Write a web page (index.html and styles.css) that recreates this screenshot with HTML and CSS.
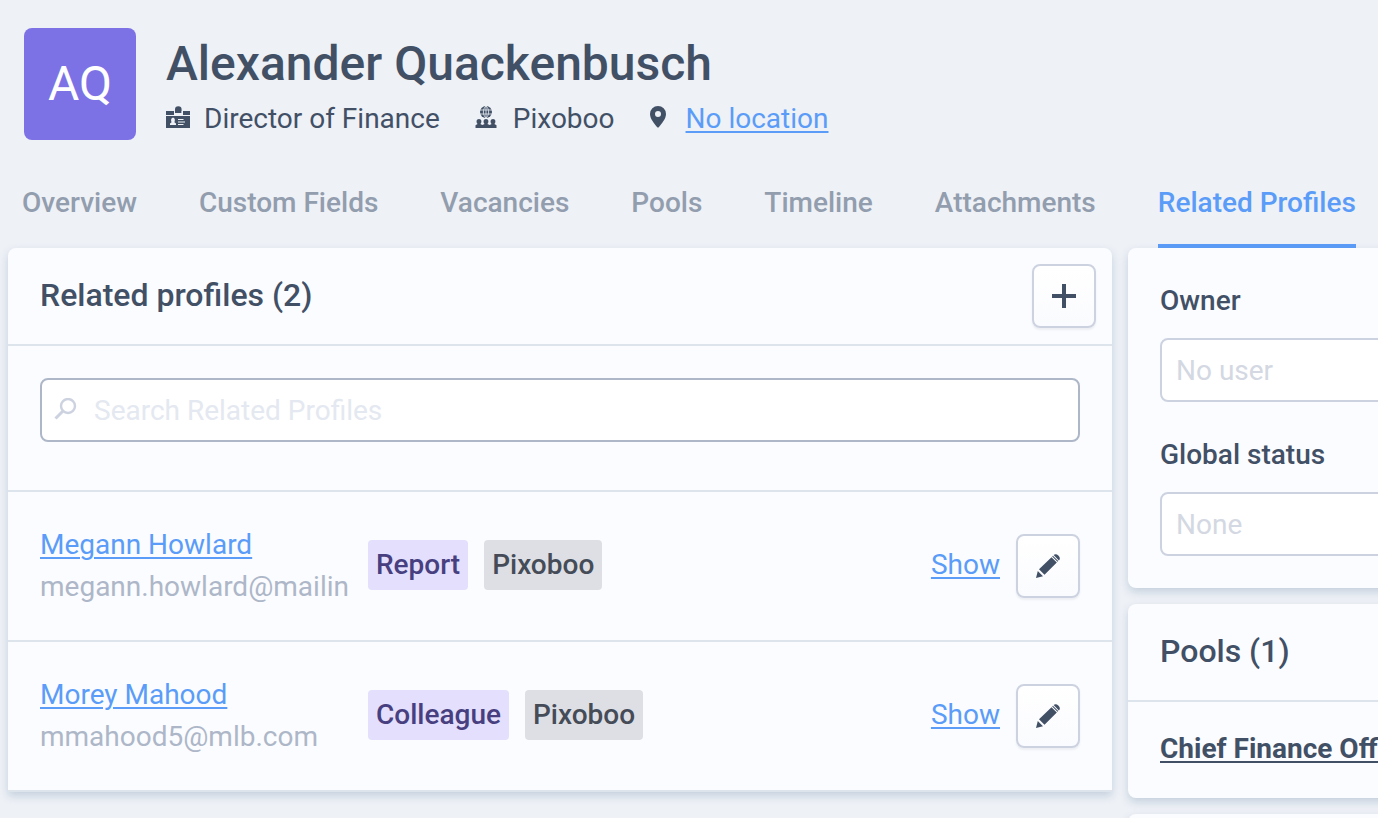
FILE: index.html
```html
<!DOCTYPE html>
<html lang="en">
<head>
<meta charset="utf-8">
<title>Alexander Quackenbusch</title>
<link rel="stylesheet" href="styles.css">
</head>
<body>
<div class="page">
  <header class="profile">
    <div class="avatar">AQ</div>
    <div class="profile-text">
      <h1 class="profile-name">Alexander Quackenbusch</h1>
      <ul class="facts">
        <li class="fact fact-job">
          <svg class="icon-badge" width="24" height="22" viewBox="0 0 24 22" aria-hidden="true">
            <path fill="currentColor" d="M0 5h8v4H0zM17 5h7v4h-7zM9 7V3.500a3.300 3.300 0 0 1 6.600 0V7zM0 10h24v12H0z"/>
            <path fill="#eef1f6" d="M8 5h1v2h6.600V5H17v3H8zM4 19v-1.500l1.600-1.200C4.700 14.500 5 11.800 7 11.800s2.300 2.700 1.400 4.500L10 17.500V19zM12 13h5.500v1H12zM12 15.500h7v1h-7zM12 18h5.500v1H12z"/>
          </svg>
          <span>Director of Finance</span>
        </li>
        <li class="fact fact-company">
          <svg class="icon-people" width="22" height="22" viewBox="0 0 22 22" aria-hidden="true">
            <circle cx="11" cy="6" r="6" fill="currentColor"/>
            <path fill="none" stroke="#eef1f6" stroke-width=".8" d="M4 4h14M4 8h14M11 0v12M11 0C7.500 3 7.500 9 11 12M11 0c3.500 3 3.500 9 0 12"/>
            <path fill="currentColor" d="M.5 22v-2.800L2.600 18c-1.700-2-1.300-5 1.400-5s3.100 3 1.400 5l1.900 1L9.600 18c-1.700-2-1.300-5 1.400-5s3.100 3 1.400 5l2.300 1 1.900-1c-1.700-2-1.300-5 1.400-5s3.100 3 1.400 5l2.100 1.200V22z"/>
          </svg>
          <span>Pixoboo</span>
        </li>
        <li class="fact fact-place">
          <svg class="icon-pin" width="16" height="22" viewBox="0 0 16 22" aria-hidden="true">
            <path fill="currentColor" fill-rule="evenodd" d="M8 0a8 8 0 0 1 8 8c0 5-4.500 9.500-7 13q-1 1-2 0C4.500 17.500 0 13 0 8a8 8 0 0 1 8-8zm0 5a3 3 0 1 0 0 6 3 3 0 0 0 0-6z"/>
          </svg>
          <a class="link" href="#location">No location</a>
        </li>
      </ul>
    </div>
  </header>

  <nav class="tabs">
    <a class="tab" href="#overview">Overview</a>
    <a class="tab" href="#custom-fields">Custom Fields</a>
    <a class="tab" href="#vacancies">Vacancies</a>
    <a class="tab" href="#pools">Pools</a>
    <a class="tab" href="#timeline">Timeline</a>
    <a class="tab" href="#attachments">Attachments</a>
    <a class="tab tab-active" href="#related" aria-current="page">Related Profiles</a>
  </nav>

  <div class="columns">
    <main class="card card-main">
      <div class="card-header">
        <h2 class="card-title">Related profiles (2)</h2>
        <button class="icon-button" type="button" aria-label="Add related profile">
          <svg width="24" height="24" viewBox="0 0 24 24" aria-hidden="true"><path fill="currentColor" d="M10 0h4v10h10v4H14v10h-4V14H0v-4h10z"/></svg>
        </button>
      </div>
      <div class="search">
        <div class="search-box">
          <svg class="search-icon" width="24" height="24" viewBox="0 0 24 24" aria-hidden="true"><g fill="none" stroke="currentColor" stroke-width="2.400"><circle cx="14" cy="8" r="7"/><path d="M9 13l-7.500 7.500" stroke-width="3"/></g></svg>
          <input class="search-input" type="search" placeholder="Search Related Profiles" aria-label="Search Related Profiles">
        </div>
      </div>
      <ul class="people">
        <li class="person">
          <div class="person-id">
            <a class="link" href="#megann">Megann Howlard</a>
            <span class="email">megann.howlard@mailin</span>
          </div>
          <div class="tags"><span class="tag tag-relation">Report</span><span class="tag">Pixoboo</span></div>
          <a class="link show-link" href="#show-megann">Show</a>
          <button class="icon-button" type="button" aria-label="Edit Megann Howlard">
            <svg width="24" height="24" viewBox="0 0 24 24" aria-hidden="true"><path fill="currentColor" d="M0 24l1.800-7 5.200 5.200zM3 15.300L15.500 3.200l5.300 5.300L8.500 20.800zM16.200 2.500l.7-.7 5.300 5.300-.7.700zM17.600 1.100C19-.3 20.700-.2 22.300 1.600 24.200 3.400 24.300 5 22.900 6.400z"/></svg>
          </button>
        </li>
        <li class="person">
          <div class="person-id">
            <a class="link" href="#morey">Morey Mahood</a>
            <span class="email">mmahood5@mlb.com</span>
          </div>
          <div class="tags"><span class="tag tag-relation">Colleague</span><span class="tag">Pixoboo</span></div>
          <a class="link show-link" href="#show-morey">Show</a>
          <button class="icon-button" type="button" aria-label="Edit Morey Mahood">
            <svg width="24" height="24" viewBox="0 0 24 24" aria-hidden="true"><path fill="currentColor" d="M0 24l1.800-7 5.200 5.200zM3 15.300L15.500 3.200l5.300 5.300L8.500 20.800zM16.200 2.500l.7-.7 5.300 5.300-.7.700zM17.600 1.100C19-.3 20.700-.2 22.300 1.600 24.200 3.400 24.300 5 22.900 6.400z"/></svg>
          </button>
        </li>
      </ul>
    </main>

    <aside class="side">
      <section class="card fields">
        <div class="field">
          <label class="field-label" for="owner">Owner</label>
          <select class="field-select" id="owner"><option>No user</option></select>
        </div>
        <div class="field">
          <label class="field-label" for="status">Global status</label>
          <select class="field-select" id="status"><option>None</option></select>
        </div>
      </section>
      <section class="card">
        <div class="card-header"><h2 class="card-title">Pools (1)</h2></div>
        <div class="pool"><a class="pool-link" href="#pool">Chief Finance Officer</a></div>
      </section>
      <section class="card card-next"></section>
    </aside>
  </div>
</div>
</body>
</html>
```
FILE: styles.css
```css
* { box-sizing: border-box; }

html { overflow: hidden; }

body {
  margin: 0;
  background: #eef1f6;
  color: #425066;
  font: 400 28px/42px Roboto, "Liberation Sans", sans-serif;
}

h1, h2, ul { margin: 0; padding: 0; font-weight: 500; }
ul { list-style: none; font-weight: 400; }
svg { display: block; flex: none; }

/* The side column runs past the right edge of the window. */
.page { margin-right: -240px; padding: 28px 8px 24px; }

.link { color: #5a9cf8; text-decoration: underline; text-decoration-thickness: 2px; text-underline-offset: 3px; }

.profile { display: flex; gap: 30px; padding: 0 16px; }

.avatar {
  display: flex;
  align-items: center;
  justify-content: center;
  flex: none;
  width: 112px;
  height: 112px;
  border-radius: 8px;
  background: #7c72e6;
  color: #fff;
  font-size: 48px;
}

.profile-name { padding-top: 6px; font-size: 48px; line-height: 60px; }

.facts { display: flex; gap: 35px; padding-top: 4px; }
.fact { display: flex; align-items: center; gap: 14px; }
.fact svg { margin-bottom: 4px; }
.fact-company { gap: 16px; }
.fact-place { gap: 20px; }

.tabs { display: flex; gap: 62px; margin-top: 36px; padding: 0 14px; }

.tab {
  height: 72px;
  padding-top: 6px;
  border-bottom: 4px solid transparent;
  color: #929dae;
  font-weight: 500;
  text-decoration: none;
  white-space: nowrap;
}

.tab-active { border-color: #5a9cf8; color: #5a9cf8; }

.columns { display: grid; grid-template-columns: minmax(0, 1fr) 482px; gap: 16px; align-items: start; }

.card {
  border-radius: 8px;
  background: #fbfcff;
  box-shadow: 0 4px 8px rgba(110, 140, 170, 0.32);
}

.card-main { border-radius: 8px 8px 0 0; }

.card-header {
  display: flex;
  align-items: center;
  justify-content: space-between;
  height: 98px;
  padding: 0 16px 0 32px;
  border-bottom: 2px solid #dee4ec;
}

.card-title { padding-bottom: 2px; font-size: 32px; line-height: 48px; }

.icon-button {
  display: flex;
  align-items: center;
  justify-content: center;
  flex: none;
  width: 64px;
  height: 64px;
  padding: 0;
  border: 2px solid #ccd2e0;
  border-radius: 8px;
  background: linear-gradient(#fff, #fafbfe);
  box-shadow: 0 2px 2px rgba(66, 80, 102, 0.08);
  color: #425066;
}

.search { padding: 32px 32px 48px; border-bottom: 2px solid #dee4ec; }

.search-box {
  display: flex;
  align-items: center;
  gap: 16px;
  height: 64px;
  padding: 0 12px;
  border: 2px solid #adb7c8;
  border-radius: 8px;
  background: #fff;
}

.search-icon { color: #ccd2e0; }

.search-input {
  flex: 1;
  min-width: 0;
  padding: 2px 0 0;
  border: 0;
  outline: 0;
  background: none;
  color: #425066;
  font: inherit;
}

.search-input::placeholder { color: #e4e8f0; opacity: 1; }

.person {
  display: flex;
  align-items: center;
  gap: 16px;
  padding: 32px;
  border-bottom: 2px solid #dee4ec;
}

.person-id { width: 312px; overflow: hidden; white-space: nowrap; }
.person-id .link, .email { display: block; width: fit-content; }
.email { color: #adb7c8; }

.tags { display: flex; gap: 16px; flex: 1; }
.tags, .show-link { padding-bottom: 2px; }

.tag {
  padding: 4px 8px;
  border-radius: 4px;
  background: #dedfe4;
  color: #454c58;
  font-weight: 500;
}

.tag-relation { background: #e3dffc; color: #483f80; }

.side { display: grid; gap: 16px; }

.fields { display: grid; gap: 32px; padding: 32px; }
.field { display: grid; gap: 16px; }
.field-label { font-weight: 500; }

.field-select {
  height: 64px;
  padding: 2px 14px 0;
  border: 2px solid #ccd2e0;
  border-radius: 8px;
  appearance: none;
  background: #fff;
  color: #d3d8e2;
  font: inherit;
}

.pool { padding: 26px 32px 28px; }
.pool-link { color: inherit; font-weight: 700; text-decoration-thickness: 2px; text-underline-offset: 3px; }
.card-next { min-height: 96px; }
```
